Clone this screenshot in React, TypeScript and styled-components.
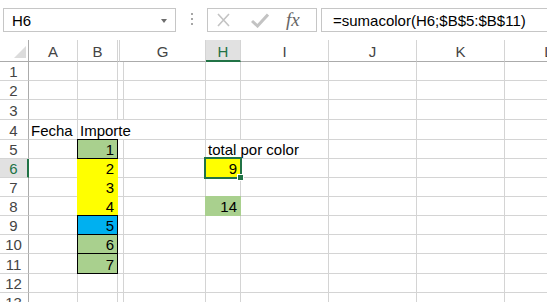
import React from "react";
import styled, { createGlobalStyle, css } from "styled-components";

const GRID = "#d4d4d4";
const HEAD_LINE = "#ababab";
const XL_GREEN = "#217346";

const FILLS = {
  green: "#a9d08e",
  yellow: "#ffff00",
  blue: "#00b0f0",
};

type Fill = keyof typeof FILLS;

type CellData = {
  v: string;
  fill?: Fill;
  boxed?: boolean;
  num?: boolean;
  spill?: boolean;
};

const COLS = [
  { key: "A", width: 49 },
  { key: "B", width: 40 },
  { key: "CF", width: 2, hidden: true },
  { key: "G", width: 86 },
  { key: "H", width: 35 },
  { key: "I", width: 88 },
  { key: "J", width: 88 },
  { key: "K", width: 88 },
  { key: "L", width: 88 },
];

const ROW_HEIGHTS = [19, 19, 20, 20, 19, 19, 19, 19, 19, 19, 20, 19, 19];

const DATA: Record<string, CellData> = {
  A4: { v: "Fecha" },
  B4: { v: "Importe", spill: true },
  CF4: { v: "", spill: true },
  B5: { v: "1", num: true, fill: "green", boxed: true },
  B6: { v: "2", num: true, fill: "yellow" },
  B7: { v: "3", num: true, fill: "yellow" },
  B8: { v: "4", num: true, fill: "yellow" },
  B9: { v: "5", num: true, fill: "blue", boxed: true },
  B10: { v: "6", num: true, fill: "green", boxed: true },
  B11: { v: "7", num: true, fill: "green", boxed: true },
  H5: { v: "total por color", spill: true },
  H6: { v: "9", num: true, fill: "yellow" },
  H8: { v: "14", num: true, fill: "green" },
};

const ACTIVE_COL = "H";
const ACTIVE_ROW = 6;

const GlobalStyle = createGlobalStyle`
  html, body {
    margin: 0;
    padding: 0;
    background: #fff;
  }
  body {
    font-family: "Liberation Sans", Arial, sans-serif;
    overflow: hidden;
  }
`;

const App: React.FC = () => {
  return (
    <Page>
      <GlobalStyle />
      <TopBar>
        <NameBox>
          <span>H6</span>
          <Caret />
        </NameBox>
        <Grip>
          <Dot />
          <Dot />
          <Dot />
        </Grip>
        <FxBox>
          <svg width="13" height="14" viewBox="0 0 13 14">
            <path d="M1 1 L12 13 M12 1 L1 13" stroke="#c3c3c3" strokeWidth="1.6" fill="none" />
          </svg>
          <CheckIcon width="18" height="15" viewBox="0 0 18 15">
            <path d="M1 8 L6.5 13 L17 1.5" stroke="#c3c3c3" strokeWidth="3" fill="none" />
          </CheckIcon>
          <FxLabel>fx</FxLabel>
        </FxBox>
        <FormulaInput>=sumacolor(H6;$B$5:$B$11)</FormulaInput>
      </TopBar>

      <Sheet>
        <Corner>
          <svg width="12" height="12" viewBox="0 0 12 12">
            <polygon points="0,12 12,12 12,0" fill="#dcdcdc" />
          </svg>
        </Corner>
        {COLS.map((c) => (
          <ColHead key={c.key} $sel={c.key === ACTIVE_COL}>
            {c.hidden ? "" : c.key}
          </ColHead>
        ))}

        {ROW_HEIGHTS.map((_, i) => {
          const row = i + 1;
          return (
            <React.Fragment key={row}>
              <RowHead $sel={row === ACTIVE_ROW}>{row}</RowHead>
              {COLS.map((c) => {
                const id = c.key + row;
                const d = DATA[id];
                return (
                  <Cell
                    key={id}
                    $fill={d?.fill ? FILLS[d.fill] : undefined}
                    $num={d?.num}
                    $spill={d?.spill}
                    $boxed={d?.boxed}
                    $active={c.key === ACTIVE_COL && row === ACTIVE_ROW}
                  >
                    {d?.v}
                  </Cell>
                );
              })}
            </React.Fragment>
          );
        })}
      </Sheet>
    </Page>
  );
};

export default App;

const Page = styled.div`
  width: 547px;
  height: 302px;
  overflow: hidden;
  background: #fff;
`;

const TopBar = styled.div`
  height: 40px;
  box-sizing: border-box;
  padding: 8px 0 0 3px;
  display: flex;
  align-items: flex-start;
  font-size: 15px;
  color: #000;
`;

const NameBox = styled.div`
  width: 173px;
  height: 24px;
  box-sizing: border-box;
  border: 1px solid #c6c6c6;
  padding: 0 8px 0 8px;
  display: flex;
  align-items: center;
  justify-content: space-between;
  flex-shrink: 0;
`;

const Caret = styled.div`
  width: 0;
  height: 0;
  border-left: 3.5px solid transparent;
  border-right: 3.5px solid transparent;
  border-top: 4px solid #6d6d6d;
  margin-top: 1px;
`;

const Grip = styled.div`
  width: 31px;
  height: 22px;
  flex-shrink: 0;
  display: flex;
  flex-direction: column;
  align-items: center;
  justify-content: center;
  gap: 3px;
`;

const Dot = styled.div`
  width: 2px;
  height: 2px;
  background: #a6a6a6;
`;

const FxBox = styled.div`
  width: 110px;
  height: 24px;
  box-sizing: border-box;
  border: 1px solid #c6c6c6;
  display: flex;
  align-items: center;
  padding-left: 9px;
  flex-shrink: 0;
`;

const CheckIcon = styled.svg`
  margin-left: 21px;
`;

const FxLabel = styled.span`
  margin-left: 17px;
  font-family: "Liberation Serif", "Times New Roman", serif;
  font-style: italic;
  font-size: 19px;
  color: #666;
  line-height: 20px;
  margin-top: -1px;
`;

const FormulaInput = styled.div`
  margin-left: 4px;
  width: 260px;
  height: 24px;
  box-sizing: border-box;
  border: 1px solid #c6c6c6;
  padding-left: 11px;
  display: flex;
  align-items: center;
  white-space: nowrap;
  flex-shrink: 0;
`;

const Sheet = styled.div`
  display: grid;
  grid-template-columns: 29px ${COLS.map((c) => `${c.width}px`).join(" ")};
  grid-template-rows: 22px ${ROW_HEIGHTS.map((h) => `${h}px`).join(" ")};
  width: max-content;
  font-size: 15px;
`;

const Corner = styled.div`
  box-sizing: border-box;
  border-right: 1px solid ${HEAD_LINE};
  border-bottom: 1px solid ${HEAD_LINE};
  display: flex;
  align-items: flex-end;
  justify-content: flex-end;
  padding: 0 2px 3px 0;
`;

const ColHead = styled.div<{ $sel?: boolean }>`
  box-sizing: border-box;
  display: flex;
  align-items: flex-end;
  justify-content: center;
  border-right: 1px solid ${GRID};
  border-bottom: ${(p) => (p.$sel ? `2px solid ${XL_GREEN}` : `1px solid ${HEAD_LINE}`)};
  background: ${(p) => (p.$sel ? "#e1e1e1" : "#fff")};
  color: ${(p) => (p.$sel ? XL_GREEN : "#444")};
  line-height: 17px;
  padding-bottom: ${(p) => (p.$sel ? "0" : "1px")};
`;

const RowHead = styled.div<{ $sel?: boolean }>`
  box-sizing: border-box;
  display: flex;
  align-items: flex-end;
  justify-content: center;
  border-right: ${(p) => (p.$sel ? `2px solid ${XL_GREEN}` : `1px solid ${HEAD_LINE}`)};
  border-bottom: 1px solid ${GRID};
  background: ${(p) => (p.$sel ? "#e1e1e1" : "#fff")};
  color: ${(p) => (p.$sel ? XL_GREEN : "#444")};
  line-height: 17px;
  padding-right: ${(p) => (p.$sel ? "0" : "1px")};
`;

const Cell = styled.div<{
  $fill?: string;
  $num?: boolean;
  $spill?: boolean;
  $boxed?: boolean;
  $active?: boolean;
}>`
  position: relative;
  box-sizing: border-box;
  display: flex;
  align-items: flex-end;
  justify-content: ${(p) => (p.$num ? "flex-end" : "flex-start")};
  padding: 0 3px 0 2px;
  border-right: 1px solid ${(p) => (p.$spill ? "transparent" : p.$fill ?? GRID)};
  border-bottom: 1px solid ${(p) => p.$fill ?? GRID};
  background: ${(p) => p.$fill ?? "transparent"};
  box-shadow: ${(p) =>
    p.$fill
      ? `-1px 0 0 ${p.$fill}, 0 -1px 0 ${p.$fill}, -1px -1px 0 ${p.$fill}`
      : "none"};
  color: #000;
  line-height: 16px;
  white-space: nowrap;
  min-width: 0;

  ${(p) =>
    p.$boxed &&
    css`
      &::after {
        content: "";
        position: absolute;
        inset: -1px;
        border: 1px solid #000;
        z-index: 1;
        pointer-events: none;
      }
    `}

  ${(p) =>
    p.$active &&
    css`
      &::after {
        content: "";
        position: absolute;
        inset: -2px;
        border: 2px solid ${XL_GREEN};
        z-index: 2;
        pointer-events: none;
      }
      &::before {
        content: "";
        position: absolute;
        right: -4px;
        bottom: -4px;
        width: 5px;
        height: 5px;
        background: ${XL_GREEN};
        border: 1px solid #fff;
        z-index: 3;
      }
    `}
`;
